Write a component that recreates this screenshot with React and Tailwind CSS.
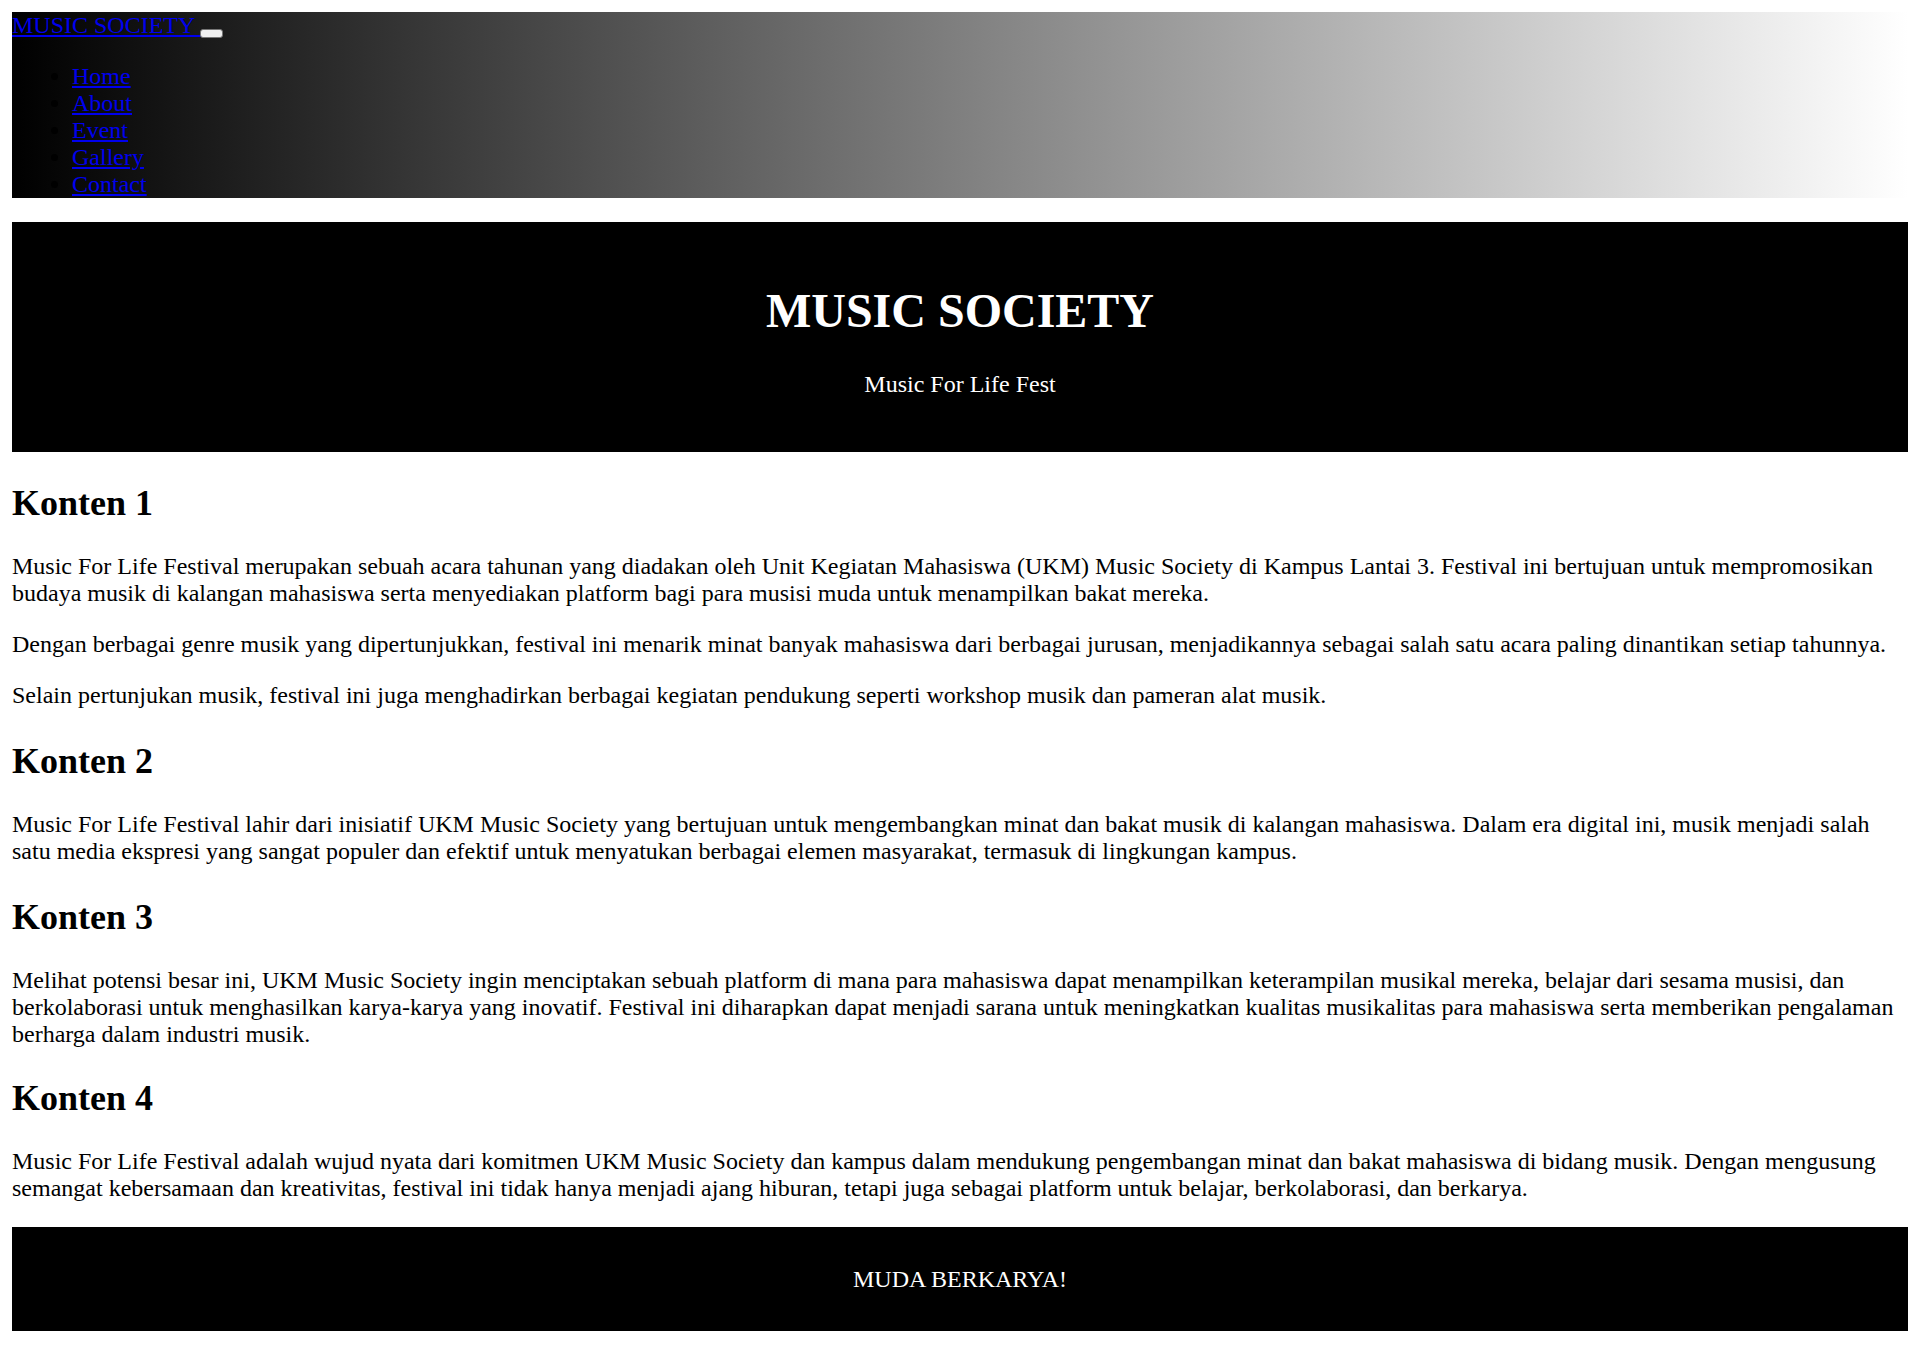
export default function App() {
  const h2 = "text-[36px] font-bold leading-[40.5px] mb-[29.88px]";
  const p = "my-[24px]";
  return (
    <div className="p-[12px] bg-white text-black text-[24px] leading-[27px] font-['Liberation_Serif','Times_New_Roman',serif]">
      <nav className="bg-[linear-gradient(to_right,#000000,#ffffff)]">
        <a href="#" className="text-[#0000ee] underline">MUSIC SOCIETY </a>
        <button type="button" aria-label="menu" className="inline-block w-[23px] h-[9px] p-0 align-[-4px] bg-[#efefef] border border-[#767676] rounded-[3px]"></button>
        <ul className="list-disc pl-[60px] my-[24px]">
          <li><a href="#" className="text-[#0000ee] underline">Home</a></li>
          <li><a href="#" className="text-[#0000ee] underline">About</a></li>
          <li><a href="#" className="text-[#0000ee] underline">Event</a></li>
          <li><a href="#" className="text-[#0000ee] underline">Gallery</a></li>
          <li><a href="#" className="text-[#0000ee] underline">Contact</a></li>
        </ul>
      </nav>
      <header className="bg-black text-white text-center p-[30px]">
        <h1 className="text-[48px] font-bold leading-[55.5px] mt-[31.2px] mb-[32.1px]">MUSIC SOCIETY</h1>
        <p className={p}>Music For Life Fest</p>
      </header>
      <main>
        <section>
          <h2 className={"mt-[30.9px] " + h2}>Konten 1</h2>
          <p className={p}>Music For Life Festival merupakan sebuah acara tahunan yang diadakan oleh Unit Kegiatan Mahasiswa (UKM) Music Society di Kampus Lantai 3. Festival ini bertujuan untuk mempromosikan budaya musik di kalangan mahasiswa serta menyediakan platform bagi para musisi muda untuk menampilkan bakat mereka.</p>
          <p className={p}>Dengan berbagai genre musik yang dipertunjukkan, festival ini menarik minat banyak mahasiswa dari berbagai jurusan, menjadikannya sebagai salah satu acara paling dinantikan setiap tahunnya.</p>
          <p className={p}>Selain pertunjukan musik, festival ini juga menghadirkan berbagai kegiatan pendukung seperti workshop musik dan pameran alat musik.</p>
        </section>
        <section>
          <h2 className={"mt-[31.5px] " + h2}>Konten 2</h2>
          <p className={p}>Music For Life Festival lahir dari inisiatif UKM Music Society yang bertujuan untuk mengembangkan minat dan bakat musik di kalangan mahasiswa. Dalam era digital ini, musik menjadi salah satu media ekspresi yang sangat populer dan efektif untuk menyatukan berbagai elemen masyarakat, termasuk di lingkungan kampus.</p>
        </section>
        <section>
          <h2 className={"mt-[32px] " + h2}>Konten 3</h2>
          <p className={p}>Melihat potensi besar ini, UKM Music Society ingin menciptakan sebuah platform di mana para mahasiswa dapat menampilkan keterampilan musikal mereka, belajar dari sesama musisi, dan berkolaborasi untuk menghasilkan karya-karya yang inovatif. Festival ini diharapkan dapat menjadi sarana untuk meningkatkan kualitas musikalitas para mahasiswa serta memberikan pengalaman berharga dalam industri musik.</p>
        </section>
        <section>
          <h2 className={"mt-[29.6px] " + h2}>Konten 4</h2>
          <p className={p}>Music For Life Festival adalah wujud nyata dari komitmen UKM Music Society dan kampus dalam mendukung pengembangan minat dan bakat mahasiswa di bidang musik. Dengan mengusung semangat kebersamaan dan kreativitas, festival ini tidak hanya menjadi ajang hiburan, tetapi juga sebagai platform untuk belajar, berkolaborasi, dan berkarya.</p>
        </section>
      </main>
      <footer className="bg-black text-white text-center pt-[15px] pb-[14px] mt-[24.6px]">
        <p className={p}>MUDA BERKARYA!</p>
      </footer>
    </div>
  );
}
